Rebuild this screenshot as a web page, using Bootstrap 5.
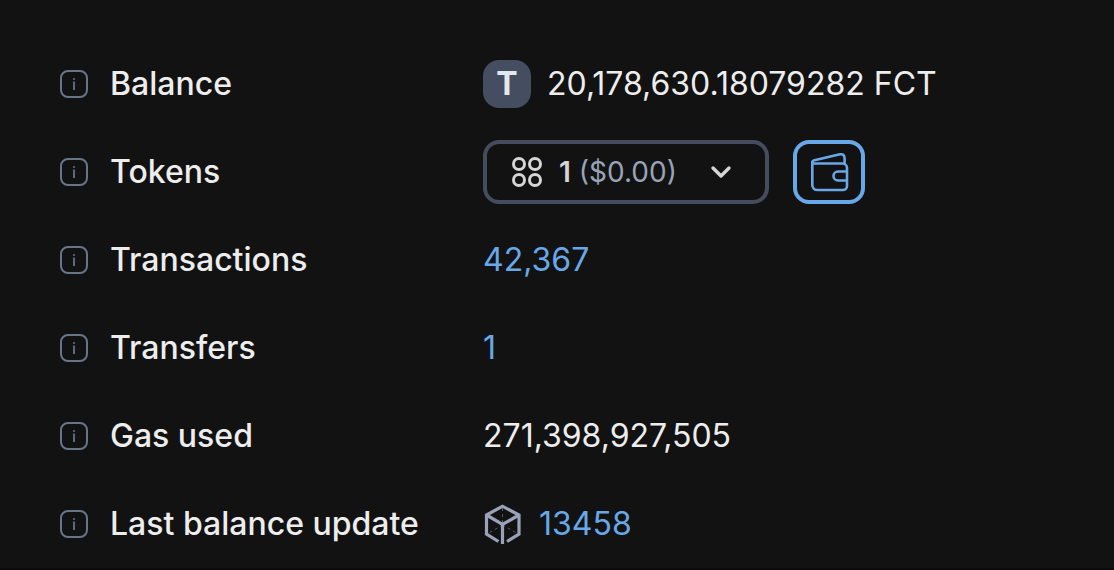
<!DOCTYPE html>
<html lang="en" data-bs-theme="dark">
<head>
<meta charset="utf-8">
<meta name="viewport" content="width=device-width, initial-scale=1">
<title>Address details</title>
<link href="https://cdn.jsdelivr.net/npm/bootstrap@5.3.0/dist/css/bootstrap.min.css" rel="stylesheet">
<style>
  body { background: #121212; color: #ededee; font-family: Inter, "Liberation Sans", sans-serif; font-size: 32px; line-height: 48px; }
  a { color: #68a8e8; text-decoration: none; }
  .details { display: grid; grid-template-columns: 400px minmax(0, 1fr); column-gap: 24px; row-gap: 24px; padding: 52px 59px 12px; border-bottom: 2px solid #0b0b0b; }
  .details dt, .details dd { display: flex; align-items: center; min-height: 64px; margin: 0; white-space: nowrap; }
  .details dt { gap: 21px; font-weight: 500; }
  .info { color: #68748a; }
  .token-mark { width: 48px; height: 48px; border-radius: 16px; background: #454e60; color: #e2e8f0; font-weight: 700; }
  .token-select { height: 64px; width: 286px; border: 4px solid #454c5e; border-radius: 16px; color: #d5d5d5; font-size: 28px; line-height: 40px; padding: 0 32px 0 24px; }
  .token-select .usd { color: #99a3b8; font-weight: 400; }
  .wallet { width: 72px; height: 64px; border: 4px solid #68a8e8; border-radius: 16px; color: #68a8e8; }
</style>
</head>
<body>
<svg class="d-none" aria-hidden="true">
  <symbol id="info" viewBox="0 0 30 30"><rect x="2" y="2" width="26" height="26" rx="7" fill="none" stroke="currentColor" stroke-width="2"/><path d="M15 12.500v8.500" stroke="currentColor" stroke-width="1.800"/><circle cx="15" cy="10" r="1" fill="currentColor"/></symbol>
</svg>
<main class="container-fluid p-0">
  <dl class="details m-0">
    <dt><svg class="info" width="30" height="30"><use href="#info"/></svg>Balance</dt>
    <dd><span class="token-mark d-inline-flex align-items-center justify-content-center me-3">T</span>20,178,630.18079282 FCT</dd>

    <dt><svg class="info" width="30" height="30"><use href="#info"/></svg>Tokens</dt>
    <dd class="gap-4">
      <button type="button" class="token-select btn d-flex align-items-center" aria-label="Tokens: 1 ($0.00)">
        <svg class="me-3" width="32" height="32" viewBox="0 0 32 32" fill="none" stroke="currentColor" stroke-width="3"><circle cx="8" cy="8" r="5.500"/><circle cx="24" cy="8" r="5.500"/><circle cx="8" cy="24" r="5.500"/><circle cx="24" cy="24" r="5.500"/></svg>
        <span class="fw-semibold me-2">1</span><span class="usd">($0.00)</span>
        <svg class="ms-auto" width="24" height="24" viewBox="0 0 24 24" fill="none" stroke="currentColor" stroke-width="3.400" stroke-linecap="round" stroke-linejoin="round"><path d="M4 8l8 8 8-8"/></svg>
      </button>
      <button type="button" class="wallet btn p-0 d-flex align-items-center justify-content-center" aria-label="Wallet">
        <svg width="40" height="40" viewBox="0 0 40 40" fill="none" stroke="currentColor" stroke-width="2.600" stroke-linejoin="round"><path d="M3.300 10.500V33a5 5 0 0 0 5 5H34a4 4 0 0 0 4-4V16a4.500 4.500 0 0 0-4.500-4.500H5.500C2.500 11.500 2.600 9 5.500 8.300L31 2.300Q35.300 1.600 35.600 6v6"/><path d="M38 19.500h-9a4.500 4.500 0 0 0 0 9h9"/></svg>
      </button>
    </dd>

    <dt><svg class="info" width="30" height="30"><use href="#info"/></svg>Transactions</dt>
    <dd><a href="#transactions">42,367</a></dd>

    <dt><svg class="info" width="30" height="30"><use href="#info"/></svg>Transfers</dt>
    <dd><a href="#transfers">1</a></dd>

    <dt><svg class="info" width="30" height="30"><use href="#info"/></svg>Gas used</dt>
    <dd>271,398,927,505</dd>

    <dt><svg class="info" width="30" height="30"><use href="#info"/></svg>Last balance update</dt>
    <dd class="gap-3"><svg width="40" height="40" viewBox="0 0 40 40" fill="none" stroke="#99a3b8" stroke-width="3.200"><path stroke-width="1" stroke-dasharray="3 3" stroke="#565c68" d="M19.500 4v16M19.500 21L4 30M19.500 21l16 9"/><path d="M15.500 37.500L3.500 30V11L19.500 2.200 36 11V30l-12 7.500M3.500 11L19.500 20.500 36 11M19.500 20v20"/></svg><a href="#block">13458</a></dd>
  </dl>
</main>
<script src="https://cdn.jsdelivr.net/npm/bootstrap@5.3.0/dist/js/bootstrap.bundle.min.js"></script>
</body>
</html>
